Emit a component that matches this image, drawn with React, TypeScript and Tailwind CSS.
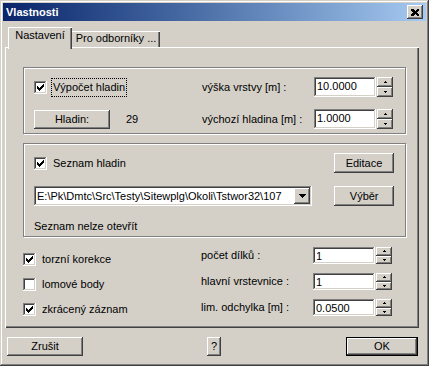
import React from "react";

const raised =
  "bg-[#d4d0c8] shadow-[inset_-1px_-1px_#404040,inset_1px_1px_#fff,inset_-2px_-2px_#808080,inset_2px_2px_#d4d0c8]";
const sunken =
  "bg-white shadow-[inset_-1px_-1px_#fff,inset_1px_1px_#808080,inset_-2px_-2px_#d4d0c8,inset_2px_2px_#404040]";
const etched = "border border-[#808080] shadow-[1px_1px_#fff,inset_1px_1px_#fff]";

function Check({ checked }: { checked: boolean }) {
  return (
    <span className={"w-[13px] h-[13px] shrink-0 flex items-center justify-center " + sunken}>
      {checked && (
        <svg width="7" height="7" viewBox="0 0 7 7" shapeRendering="crispEdges">
          <rect x="6" y="0" width="1" height="1" />
          <rect x="5" y="1" width="2" height="1" />
          <rect x="0" y="2" width="1" height="1" />
          <rect x="4" y="2" width="3" height="1" />
          <rect x="0" y="3" width="2" height="1" />
          <rect x="3" y="3" width="3" height="1" />
          <rect x="0" y="4" width="5" height="1" />
          <rect x="1" y="5" width="3" height="1" />
          <rect x="2" y="6" width="1" height="1" />
        </svg>
      )}
    </span>
  );
}

function Spin() {
  // little up / down buttons beside a number field
  return (
    <div className="w-[16px] h-full flex flex-col">
      <div className={"flex-1 flex items-center justify-center " + raised}>
        <svg width="3" height="2" viewBox="0 0 3 2" shapeRendering="crispEdges">
          <rect x="1" y="0" width="1" height="1" />
          <rect x="0" y="1" width="3" height="1" />
        </svg>
      </div>
      <div className={"flex-1 flex items-center justify-center " + raised}>
        <svg width="3" height="2" viewBox="0 0 3 2" shapeRendering="crispEdges">
          <rect x="0" y="0" width="3" height="1" />
          <rect x="1" y="1" width="1" height="1" />
        </svg>
      </div>
    </div>
  );
}

function NumField({ label, value, h }: { label: string; value: string; h: string }) {
  return (
    <div className={"flex items-center " + h}>
      <span className="w-[112px]">{label}</span>
      <div className={"w-[62px] h-full flex items-start pl-[3px] pt-[3px] " + sunken}>{value}</div>
      <div className="h-full ml-[1px]">
        <Spin />
      </div>
    </div>
  );
}

function Btn({ children, className = "" }: { children: React.ReactNode; className?: string }) {
  return (
    <div className={"flex items-center justify-center " + raised + " " + className}>{children}</div>
  );
}

export default function App() {
  return (
    <div className="w-[429px] h-[366px] bg-[#d4d0c8] p-[3px] flex flex-col font-['Liberation_Sans',Arial,sans-serif] text-[11px] leading-[13px] text-black shadow-[inset_-1px_-1px_#404040,inset_1px_1px_#d4d0c8,inset_-2px_-2px_#808080,inset_2px_2px_#fff]">
      {/* Title bar */}
      <div className="h-[18px] shrink-0 flex items-center justify-between bg-linear-to-r from-[#0a246a] to-[#a6caf0] pl-[3px] pr-[3px]">
        <span className="text-white font-bold">Vlastnosti</span>
        <Btn className="w-[16px] h-[14px]">
          <svg width="8" height="7" viewBox="0 0 8 7" shapeRendering="crispEdges">
            <path d="M0 0h2l2 2 2-2h2v1L6 3.5 8 6v1H6L4 5 2 7H0V6l2-2.5L0 1z" />
          </svg>
        </Btn>
      </div>

      {/* Tabs */}
      <div className="mt-[6px] h-[20px] flex items-end ml-[5px]">
        <div className="relative z-10 w-[64px] h-[22px] mb-[-2px] bg-[#d4d0c8] flex justify-center pt-[2px] shadow-[inset_1px_1px_#fff,inset_-1px_0_#404040,inset_-2px_0_#808080]">
          Nastavení
        </div>
        <div className="w-[88px] h-[16px] flex justify-center pt-[1px] shadow-[inset_0_1px_#fff,inset_-1px_0_#404040,inset_-2px_0_#808080]">
          Pro odborníky ...
        </div>
      </div>

      {/* Tab panel */}
      <div className="ml-[2px] w-[414px] h-[281px] pt-[20px] pl-[18px] flex flex-col shadow-[inset_1px_1px_#fff,inset_-1px_-1px_#404040,inset_-2px_-2px_#808080]">
        {/* Group 1 */}
        <div className={"w-[383px] h-[67px] pt-[9px] pl-[10px] flex flex-col gap-[12px] " + etched}>
          <div className="h-[20px] flex items-center">
            <div className="w-[168px] flex items-center">
              <Check checked />
              <span className="ml-[4px] px-[1px] py-[2px] border border-dotted border-black">Výpočet hladin</span>
            </div>
            <NumField label="výška vrstvy [m] :" value="10.0000" h="h-[20px]" />
          </div>
          <div className="h-[20px] flex items-center">
            <div className="w-[168px] flex items-center">
              <Btn className="w-[76px] h-[19px]">Hladin:</Btn>
              <span className="ml-[16px]">29</span>
            </div>
            <NumField label="výchozí hladina [m] :" value="1.0000" h="h-[20px]" />
          </div>
        </div>

        {/* Group 2 */}
        <div className={"mt-[9px] w-[383px] h-[94px] pt-[9px] pl-[10px] pr-[11px] flex flex-col " + etched}>
          <div className="h-[20px] flex items-center justify-between">
            <div className="flex items-center">
              <Check checked />
              <span className="ml-[6px]">Seznam hladin</span>
            </div>
            <Btn className="w-[60px] h-[20px]">Editace</Btn>
          </div>
          <div className="mt-[13px] h-[20px] flex items-center">
            <div className={"w-[280px] h-full flex items-center p-[2px] " + sunken}>
              <span className="flex-1 overflow-hidden whitespace-nowrap pl-[1px]">
                E:\Pk\Dmtc\Src\Testy\Sitewplg\Okoli\Tstwor32\107
              </span>
              <Btn className="w-[16px] h-[16px] shrink-0">
                <svg width="7" height="4" viewBox="0 0 7 4" shapeRendering="crispEdges">
                  <rect x="0" y="0" width="7" height="1" />
                  <rect x="1" y="1" width="5" height="1" />
                  <rect x="2" y="2" width="3" height="1" />
                  <rect x="3" y="3" width="1" height="1" />
                </svg>
              </Btn>
            </div>
            <Btn className="ml-[22px] w-[60px] h-[20px]">Výběr</Btn>
          </div>
          <span className="mt-[14px]">Seznam nelze otevřít</span>
        </div>

        {/* Bottom options */}
        <div className="mt-[10px] flex">
          <div className="w-[178px] pt-[6px] flex flex-col gap-[12px]">
            <div className="h-[13px] flex items-center">
              <Check checked />
              <span className="ml-[6px]">torzní korekce</span>
            </div>
            <div className="h-[13px] flex items-center">
              <Check checked={false} />
              <span className="ml-[6px]">lomové body</span>
            </div>
            <div className="h-[13px] flex items-center">
              <Check checked />
              <span className="ml-[6px]">zkrácený záznam</span>
            </div>
          </div>
          <div className="flex flex-col gap-[9px]">
            <NumField label="počet dílků :" value="1" h="h-[17px]" />
            <NumField label="hlavní vrstevnice :" value="1" h="h-[17px]" />
            <NumField label="lim. odchylka [m] :" value="0.0500" h="h-[17px]" />
          </div>
        </div>
      </div>

      {/* Dialog buttons */}
      <div className="mt-[9px] h-[19px] flex pl-[4px]">
        <Btn className="w-[76px] h-full">Zrušit</Btn>
        <Btn className="ml-[124px] w-[14px] h-full">?</Btn>
        <div className="ml-[125px] w-[72px] h-full flex items-center justify-center bg-[#d4d0c8] shadow-[inset_0_0_0_1px_#000,inset_-2px_-2px_#404040,inset_2px_2px_#fff,inset_-3px_-3px_#808080]">
          OK
        </div>
      </div>
    </div>
  );
}
